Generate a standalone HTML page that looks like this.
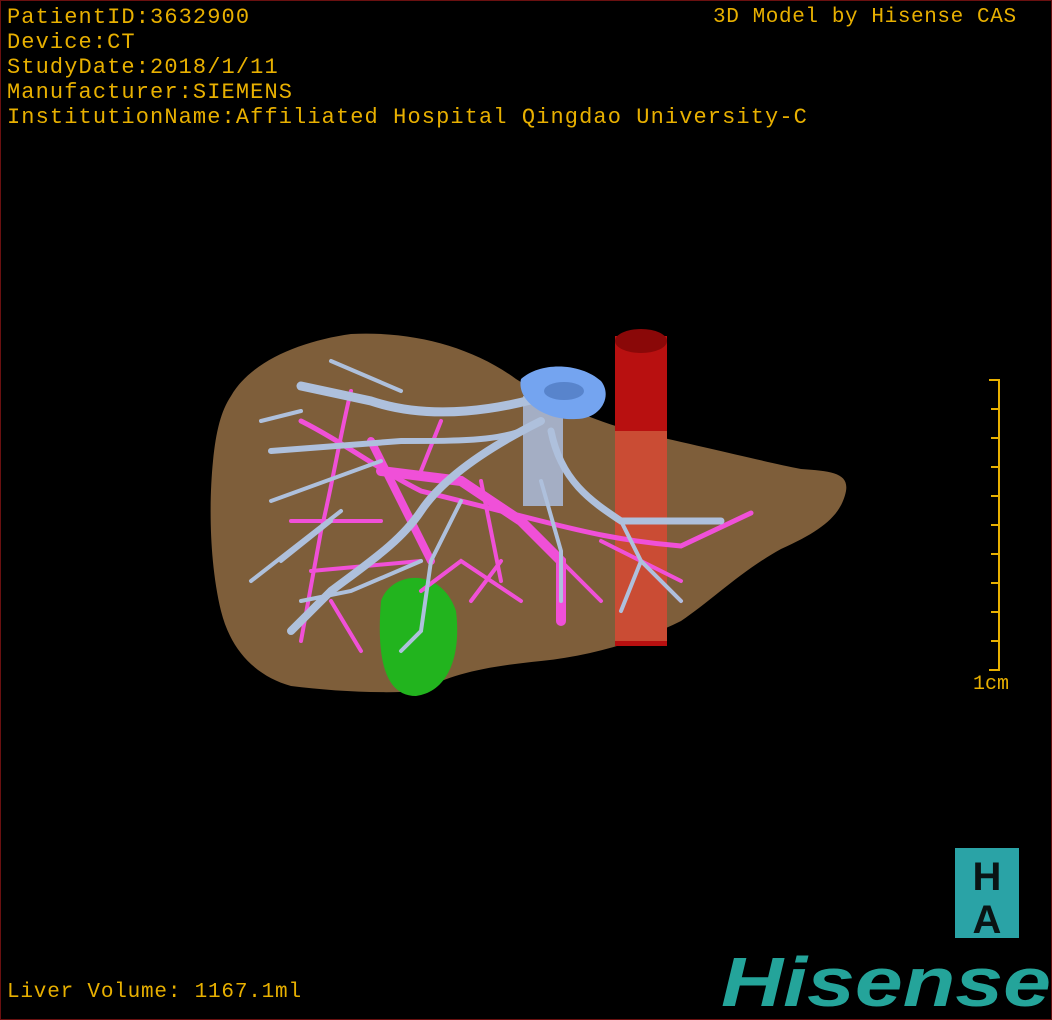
<!DOCTYPE html>
<html><head><meta charset="utf-8"><style>
html,body{margin:0;padding:0;background:#000;}
#c{position:relative;width:1052px;height:1020px;background:#000;overflow:hidden;box-sizing:border-box;border:1px solid #6a1010;}
.t{position:absolute;color:#e8b000;font-family:"Liberation Mono",monospace;font-size:22px;letter-spacing:1.1px;line-height:25px;white-space:pre;}
</style></head><body><div id="c">
<div class="t" style="left:6px;top:4px">PatientID:3632900
Device:CT
StudyDate:2018/1/11
Manufacturer:SIEMENS
InstitutionName:Affiliated Hospital Qingdao University-C</div>
<div class="t" style="left:712px;top:4px;font-size:21px;letter-spacing:0.6px">3D Model by Hisense CAS</div>
<div class="t" style="left:6px;top:979px;font-size:21px;letter-spacing:0.8px">Liver Volume: 1167.1ml</div>
<div class="t" style="left:972px;top:671px;font-size:20px;letter-spacing:0">1cm</div>
<svg width="1052" height="1020" style="position:absolute;left:0;top:0">
<g stroke="#e8b000" stroke-width="2">
<line x1="998" y1="378" x2="998" y2="670"/>
<line x1="988" y1="379" x2="998" y2="379"/><line x1="990" y1="408" x2="998" y2="408"/><line x1="990" y1="437" x2="998" y2="437"/><line x1="990" y1="466" x2="998" y2="466"/><line x1="990" y1="495" x2="998" y2="495"/><line x1="990" y1="524" x2="998" y2="524"/><line x1="990" y1="553" x2="998" y2="553"/><line x1="990" y1="582" x2="998" y2="582"/><line x1="990" y1="611" x2="998" y2="611"/><line x1="990" y1="640" x2="998" y2="640"/><line x1="988" y1="669" x2="998" y2="669"/>
</g>
<path d="M230,395 C250,360 300,340 350,333 C410,330 470,345 515,378 C550,400 590,420 640,432 C700,445 760,460 800,468 C830,470 848,472 845,490 C840,515 820,530 780,548 C740,570 710,600 680,620 C640,640 590,655 540,660 C490,665 450,672 420,690 C380,693 330,690 290,685 C255,675 230,650 220,610 C208,560 208,500 212,460 C215,430 220,410 230,395Z" fill="#7e5e3a"/>
<path d="M380,600 C390,570 440,565 455,610 C460,650 450,690 415,695 C385,695 375,660 380,600Z" fill="#22b41e"/>
<rect x="614" y="335" width="52" height="310" fill="#b81010"/>
<ellipse cx="640" cy="340" rx="26" ry="12" fill="#8a0808"/>
<rect x="614" y="430" width="52" height="210" fill="#d06040" opacity="0.75"/>
<rect x="522" y="395" width="40" height="110" fill="#a4aec4"/>
<g fill="none" stroke="#f050d8" stroke-linecap="round">
<path d="M300,420 C340,440 380,470 420,490 C460,500 500,510 540,520 C580,530 620,540 680,545 L750,512" stroke-width="5"/>
<path d="M370,440 C390,480 410,520 430,560" stroke-width="8"/>
<path d="M350,390 C340,430 330,490 320,530 L300,640" stroke-width="4"/>
<path d="M380,470 L460,480 L520,520 L560,560 L560,620" stroke-width="10"/>
<path d="M480,480 L500,580 M540,540 L600,600 M600,540 L680,580 M290,520 L380,520 M310,570 L420,560 M420,590 L460,560 L520,600 M440,420 L420,470 M330,600 L360,650 M640,560 L680,600 M500,560 L470,600" stroke-width="4"/>
</g>
<g fill="none" stroke="#aec0dc" stroke-linecap="round">
<path d="M560,390 C500,410 430,420 370,400 L300,385" stroke-width="9"/>
<path d="M540,420 C480,450 440,480 420,510 C400,540 370,560 330,590 L290,630" stroke-width="8"/>
<path d="M540,420 C510,440 470,440 400,440 L270,450" stroke-width="6"/>
<path d="M550,430 C560,480 590,500 620,520 L720,520" stroke-width="7"/>
<path d="M620,520 L640,560 L680,600 M640,560 L620,610 M460,500 L430,560 L420,630 M420,560 L350,590 L300,600 M380,460 L270,500 M340,510 L250,580 M420,630 L400,650 M540,480 L560,550 L560,600 M400,390 L330,360 M300,410 L260,420 M330,520 L280,560" stroke-width="4"/>
</g>
<path d="M520,378 C540,360 580,362 600,380 C612,395 600,418 575,418 C545,420 515,400 520,378Z" fill="#74a4f0"/>
<ellipse cx="563" cy="390" rx="20" ry="9" fill="#5884cc"/>
<rect x="954" y="847" width="64" height="90" fill="#2aa3a6"/>
<text x="986" y="889" font-family="Liberation Sans,sans-serif" font-weight="bold" font-size="40" fill="#0a1414" text-anchor="middle">H</text>
<text x="986" y="932" font-family="Liberation Sans,sans-serif" font-weight="bold" font-size="40" fill="#0a1414" text-anchor="middle">A</text>
<text x="720" y="1005" font-family="Liberation Sans,sans-serif" font-weight="bold" font-style="italic" font-size="70" fill="#24a49a" textLength="330" lengthAdjust="spacingAndGlyphs">Hisense</text>
</svg>
</div></body></html>
